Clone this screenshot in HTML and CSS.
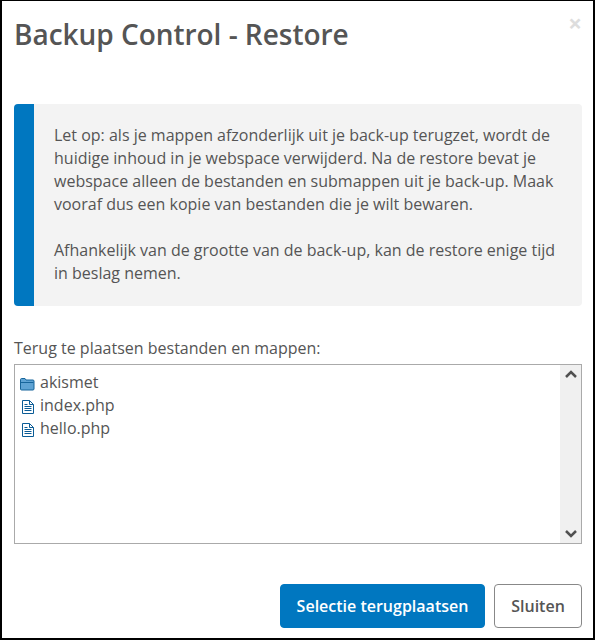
FILE: index.html
```html
<!DOCTYPE html>
<html lang="nl">
<head>
<meta charset="utf-8">
<title>Backup Control - Restore</title>
<link rel="stylesheet" href="styles.css">
</head>
<body>
<div class="modal">
  <header class="modal-header">
    <h1 class="modal-title">Backup Control - Restore</h1>
    <span class="modal-close">×</span>
  </header>
  <div class="notice">
    <p>Let op: als je mappen afzonderlijk uit je back-up terugzet, wordt de huidige inhoud in je webspace verwijderd. Na de restore bevat je webspace alleen de bestanden en submappen uit je back-up. Maak vooraf dus een kopie van bestanden die je wilt bewaren.</p>
    <p>Afhankelijk van de grootte van de back-up, kan de restore enige tijd in beslag nemen.</p>
  </div>
  <label class="list-label">Terug te plaatsen bestanden en mappen:</label>
  <div class="file-box">
    <ul class="file-list">
      <li class="file-row">
        <svg class="icon" width="16" height="18" viewBox="0 0 16 18"><path d="M1.500 7V6.500C1.500 6 2 5.500 2.500 5.500H6L7 7h7c.6 0 1 .4 1 1v8c0 .6-.4 1-1 1H2.500c-.6 0-1-.4-1-1z" fill="#5fa3d4" stroke="#17659b"/><path d="M2 9.500h12.500" stroke="#17659b"/></svg>
        <span>akismet</span>
      </li>
      <li class="file-row">
        <svg class="icon" width="16" height="18" viewBox="0 0 16 18"><path d="M3.500 4.500h7l4 4v9h-11z" fill="#fff" stroke="#0b5c96"/><path d="M10.500 4.500v4h4M5.500 8.500h3M5.500 10.500h7M5.500 12.500h7M5.500 14.500h7" fill="none" stroke="#0b5c96"/></svg>
        <span>index.php</span>
      </li>
      <li class="file-row">
        <svg class="icon" width="16" height="18" viewBox="0 0 16 18"><path d="M3.500 4.500h7l4 4v9h-11z" fill="#fff" stroke="#0b5c96"/><path d="M10.500 4.500v4h4M5.500 8.500h3M5.500 10.500h7M5.500 12.500h7M5.500 14.500h7" fill="none" stroke="#0b5c96"/></svg>
        <span>hello.php</span>
      </li>
    </ul>
    <div class="scrollbar">
      <svg width="14" height="9" viewBox="0 0 14 9"><path d="M2 7L7 2l5 5" fill="none" stroke="#505050" stroke-width="2.500"/></svg>
      <svg width="14" height="9" viewBox="0 0 14 9"><path d="M2 2l5 5 5-5" fill="none" stroke="#505050" stroke-width="2.500"/></svg>
    </div>
  </div>
  <footer class="modal-footer">
    <button class="btn btn-primary">Selectie terugplaatsen</button>
    <button class="btn btn-default">Sluiten</button>
  </footer>
</div>
</body>
</html>
```
FILE: styles.css
```css
* { box-sizing: border-box; }
html, body { margin: 0; padding: 0; background: #000; }
body { font-family: "Open Sans", sans-serif; color: #555; font-size: 16px; }
.modal {
  width: 591px; height: 637px; margin: 1px 0 0 2px; padding: 0 11px 0 12px;
  background: #fff; display: flex; flex-direction: column;
}
.modal-header { display: flex; justify-content: space-between; align-items: flex-start; height: 103px; padding: 14px 0 0 0; }
.modal-title { margin: 0; font-size: 28px; font-weight: 600; line-height: 38px; color: #555; letter-spacing: -0.03px; }
.modal-close { font-size: 24px; font-weight: 700; line-height: 20px; color: #ddd; margin: -2px 0 0 0; }
.notice {
  height: 202px; background: #f3f3f3; border-left: 20px solid #0077c0; border-radius: 4px;
  padding: 20px 20px 0 20px; line-height: 23px; color: #555;
}
.notice p { margin: 0 0 23px; }
.notice p:last-child { margin: 0; }
.list-label { display: block; margin-top: 31px; line-height: 23px; }
.file-box { display: flex; height: 180px; margin-top: 4px; border: 1px solid #aaa; }
.file-list { flex: 1; margin: 0; padding: 5px 0 0 4px; list-style: none; }
.file-row { display: flex; align-items: center; gap: 5px; height: 23px; }
.icon { flex: none; }
.scrollbar { width: 21px; background: #f0f0f0; display: flex; flex-direction: column; justify-content: space-between; align-items: center; padding: 5px 0; }
.modal-footer { display: flex; justify-content: flex-end; gap: 9px; margin-top: 40px; }
.btn { height: 44px; font: 600 16px "Open Sans", sans-serif; border-radius: 4px; padding: 0; white-space: nowrap; }
.btn-primary { width: 205px; background: #0077c0; border: 1px solid #0077c0; color: #fff; }
.btn-default { width: 88px; background: #fff; border: 1px solid #888; color: #555; }
```
